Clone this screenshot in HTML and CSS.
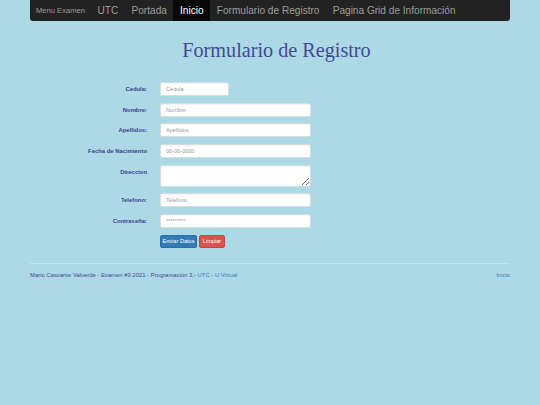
FILE: index.html
```html
<!DOCTYPE html>
<html lang="es">
<head>
<meta charset="utf-8">
<title>Formulario de Registro</title>
<link rel="stylesheet" href="styles.css">
</head>
<body>
<div class="container">
  <nav class="navbar">
    <a class="brand" href="#">Menu Examen</a>
    <ul class="nav">
      <li><a href="#">UTC</a></li>
      <li><a href="#">Portada</a></li>
      <li class="active"><a href="#">Inicio</a></li>
      <li><a href="#">Formulario de Registro</a></li>
      <li><a href="#">Pagina Grid de Información</a></li>
    </ul>
  </nav>

  <h1 class="title">Formulario de Registro</h1>

  <form class="form">
    <div class="row">
      <label class="lbl" for="cedula">Cedula:</label>
      <input class="ctl ctl-short" id="cedula" type="text" placeholder="Cedula">
    </div>
    <div class="row">
      <label class="lbl" for="nombre">Nombre:</label>
      <input class="ctl" id="nombre" type="text" placeholder="Nombre">
    </div>
    <div class="row">
      <label class="lbl" for="apellidos">Apellidos:</label>
      <input class="ctl" id="apellidos" type="text" placeholder="Apellidos">
    </div>
    <div class="row">
      <label class="lbl" for="fecha">Fecha de Nacimiento</label>
      <input class="ctl" id="fecha" type="text" placeholder="00-00-0000">
    </div>
    <div class="row row-top">
      <label class="lbl lbl-top" for="direccion">Direccion</label>
      <textarea class="ctl ctl-area" id="direccion"></textarea>
    </div>
    <div class="row">
      <label class="lbl" for="telefono">Telefono:</label>
      <input class="ctl" id="telefono" type="text" placeholder="Telefono">
    </div>
    <div class="row">
      <label class="lbl" for="clave">Contraseña:</label>
      <input class="ctl" id="clave" type="text" placeholder="*********">
    </div>
    <div class="row">
      <span class="lbl"></span>
      <div class="btns">
        <button type="button" class="btn btn-primary">Enviar Datos</button>
        <button type="button" class="btn btn-danger">Limpiar</button>
      </div>
    </div>
  </form>

  <hr class="sep">
  <footer class="footer">
    <p class="copy">Mario Cascante Valverde - Examen #3 2021 - Programación 3,- <a href="#">UTC</a> - <a href="#">U Virtual</a></p>
    <a class="top" href="#">Inicio</a>
  </footer>
</div>
</body>
</html>
```

FILE: styles.css
```css
html, body {
  margin: 0;
  padding: 0;
}
body {
  background: #add8e6;
  font-family: "Liberation Sans", Arial, sans-serif;
  color: #3f4893;
}
.container {
  width: 480px;
  margin: 0 auto;
}
.navbar {
  display: flex;
  align-items: stretch;
  height: 21px;
  background: #222222;
  border-radius: 0 0 3px 3px;
}
.brand {
  display: flex;
  align-items: center;
  padding: 0 6px;
  font-size: 7.6px;
  color: #9d9d9d;
  text-decoration: none;
}
.nav {
  display: flex;
  margin: 0;
  padding: 0;
  list-style: none;
}
.nav li {
  display: flex;
}
.nav a {
  display: flex;
  align-items: center;
  padding: 0 6.6px;
  font-size: 10.1px;
  color: #9d9d9d;
  text-decoration: none;
}
.nav li.active a {
  background: #080808;
  color: #ffffff;
}
.title {
  margin: 18px 0 0;
  padding-left: 13px;
  font-family: "Liberation Serif", "Times New Roman", serif;
  font-weight: normal;
  font-size: 20.2px;
  line-height: 23px;
  text-align: center;
  color: #414a94;
}
.form {
  margin-top: 20px;
  display: flex;
  flex-direction: column;
  gap: 6.7px;
}
.row {
  display: flex;
  align-items: center;
  gap: 13px;
}
.row-top {
  align-items: flex-start;
}
.lbl {
  width: 117px;
  flex: none;
  text-align: right;
  font-weight: bold;
  font-size: 5.9px;
  color: #3a4290;
}
.lbl-top {
  padding-top: 4px;
}
.ctl {
  box-sizing: border-box;
  width: 151px;
  height: 14px;
  margin: 0;
  padding: 0 5px;
  border: 1px solid #d6dde0;
  border-radius: 2px;
  background: #ffffff;
  box-shadow: inset 0 1px 1px rgba(0, 0, 0, 0.05);
  font-family: "Liberation Sans", Arial, sans-serif;
  font-size: 5.6px;
  color: #555;
}
.ctl::placeholder {
  color: #9a9a9a;
}
.ctl-short {
  width: 69px;
}
.ctl-area {
  height: 22px;
  padding: 3px 5px;
  resize: vertical;
}
.btns {
  display: flex;
  gap: 2px;
}
.btn {
  height: 13px;
  margin: 0;
  padding: 0;
  border: 1px solid transparent;
  border-radius: 2px;
  white-space: nowrap;
  font-family: "Liberation Sans", Arial, sans-serif;
  font-size: 5.6px;
  color: #ffffff;
}
.btn-primary {
  width: 37px;
  background: #337ab7;
  border-color: #2e6da4;
}
.btn-danger {
  width: 26px;
  background: #d9534f;
  border-color: #d43f3a;
}
.sep {
  margin: 15px 0 0;
  border: 0;
  border-top: 1px solid #c3e3ee;
  height: 0;
}
.footer {
  display: flex;
  justify-content: space-between;
  align-items: baseline;
  margin-top: 8px;
  font-size: 5.9px;
}
.copy {
  margin: 0;
  color: #3f4893;
}
.footer a {
  color: #337ab7;
  text-decoration: none;
}
```
